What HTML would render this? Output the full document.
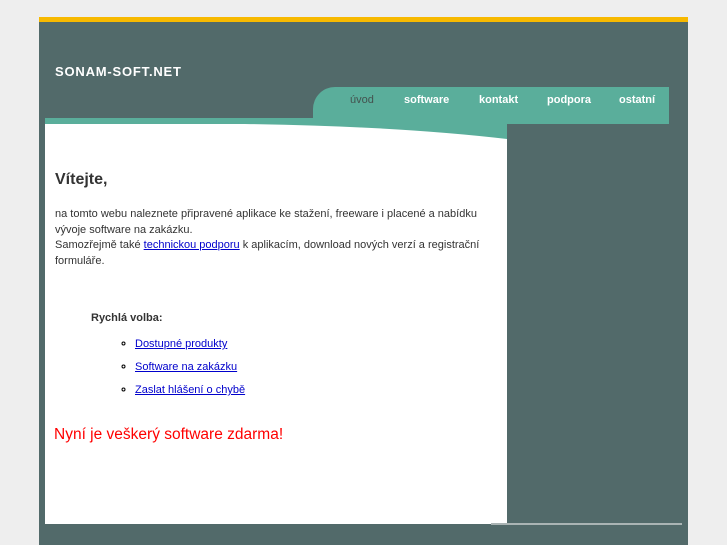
<!DOCTYPE html>
<html><head><meta charset="utf-8"><style>
body{margin:0;background:#eeeeee;width:727px;height:545px;overflow:hidden;font-family:"Liberation Sans",sans-serif;position:relative}
.a{position:absolute}
#wrap{left:39px;top:17px;width:649px;height:528px;background:#526a6a;border-top:5px solid #f7b900;box-sizing:border-box}
#logo{left:55px;top:64px;color:#fff;font-size:13px;font-weight:bold;letter-spacing:0.8px}
#nav{left:313px;top:87px;width:356px;height:37px;background:#5aae9b;border-top-left-radius:22px}
#nav span{position:absolute;top:7px;font-size:11px;font-weight:bold;color:#fff}
#strip{left:45px;top:118px;width:290px;height:7px;background:#5aae9b}
#white{left:45px;top:124px;width:462px;height:400px;background:#fff}
.t{font-size:11px;line-height:15.5px;color:#333}
a{color:#00c;}
ul{margin:0;padding:0;list-style:circle}
li{font-size:11px;margin-bottom:10px;line-height:13px}
</style></head><body>
<div class="a" id="wrap"></div>
<div class="a" id="logo">SONAM-SOFT.NET</div>
<div class="a" id="nav">
<span style="left:37px;color:#44524f;font-weight:normal">úvod</span>
<span style="left:91px">software</span>
<span style="left:166px">kontakt</span>
<span style="left:234px">podpora</span>
<span style="left:306px">ostatní</span>
</div>
<div class="a" id="strip"></div>
<div class="a" id="white"></div>
<svg class="a" style="left:45px;top:118px" width="462" height="24"><path d="M0 0 L462 0 L462 21 Q350 8 200 6 L0 6 Z" fill="#5aae9b"/></svg>
<div class="a" style="left:491px;top:523px;width:191px;height:2px;background:#aab4b4"></div>
<div class="a" style="left:55px;top:171px;font-size:16px;font-weight:bold;color:#333">Vítejte,</div>
<div class="a t" style="left:55px;top:207px;width:445px">na tomto webu naleznete připravené aplikace ke stažení, freeware i placené a nabídku vývoje software na zakázku.<br>Samozřejmě také <a href="#">technickou podporu</a> k aplikacím, download nových verzí a registrační formuláře.</div>
<div class="a" style="left:91px;top:312px;font-size:11px;font-weight:bold;color:#333">Rychlá volba:</div>
<ul class="a" style="left:135px;top:338px">
<li><a href="#">Dostupné produkty</a></li>
<li><a href="#">Software na zakázku</a></li>
<li><a href="#">Zaslat hlášení o chybě</a></li>
</ul>
<div class="a" style="left:54px;top:426px;font-size:15.5px;color:#f00">Nyní je veškerý software zdarma!</div>
</body></html>
